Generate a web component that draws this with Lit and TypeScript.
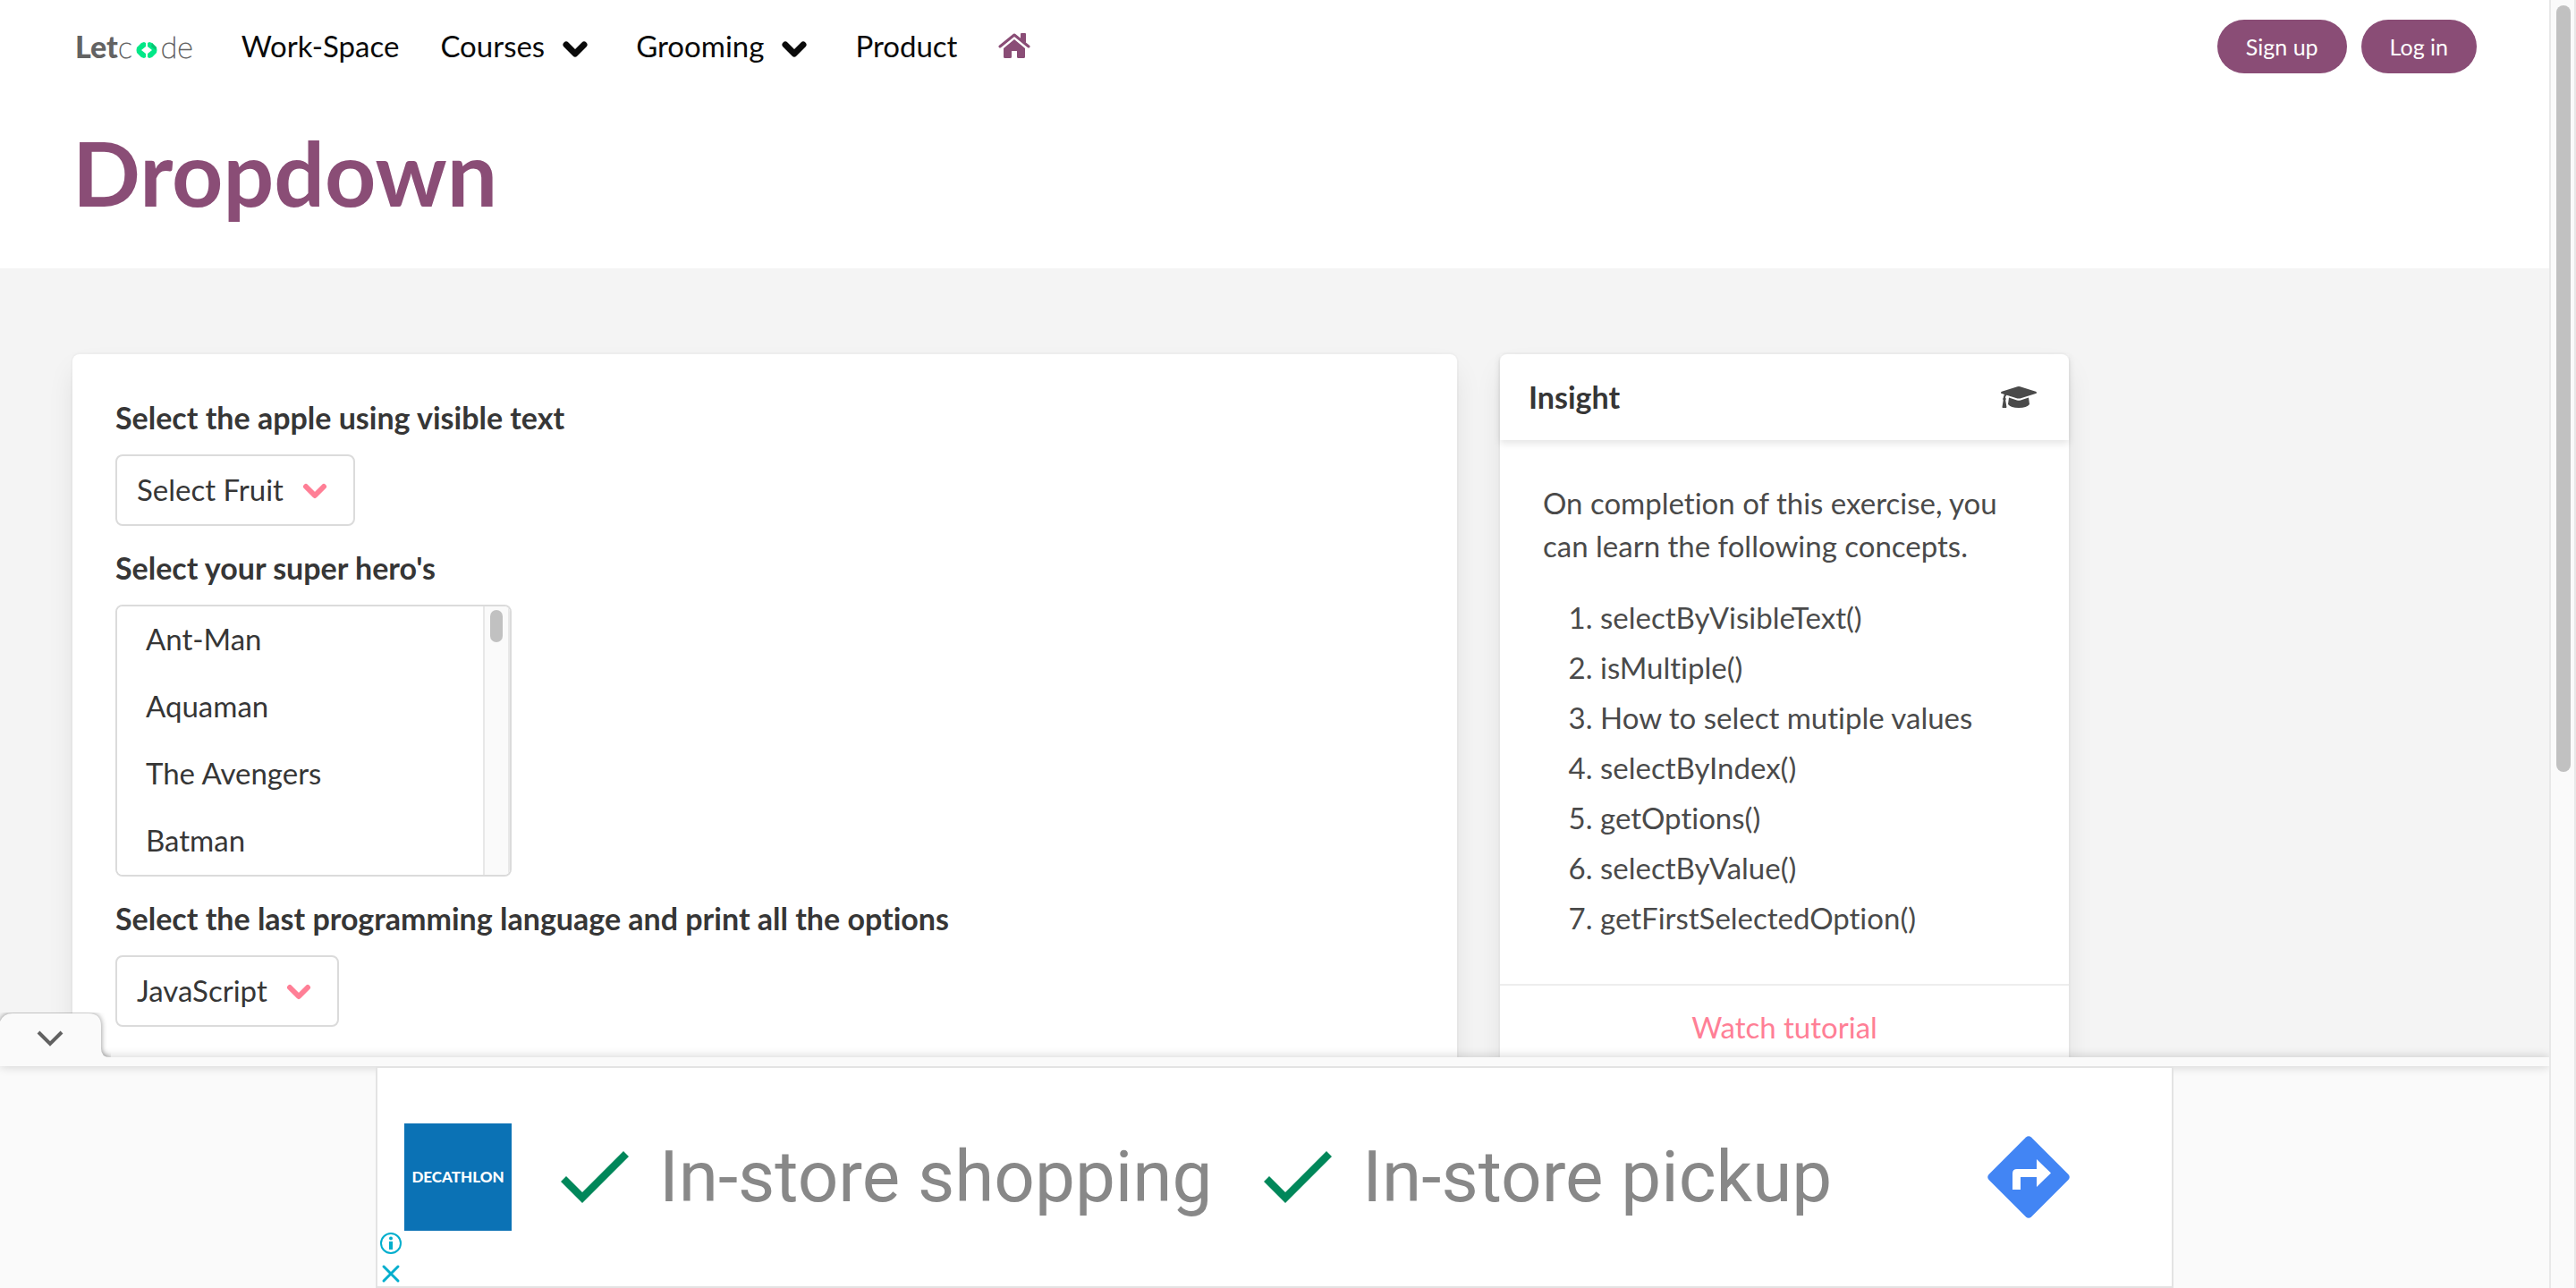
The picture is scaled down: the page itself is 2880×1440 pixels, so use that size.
import { LitElement, html, css, svg } from "lit";
import { customElement, property } from "lit/decorators.js";

const HEROES = [
  "Ant-Man", "Aquaman", "The Avengers", "Batman", "Batwoman", "Black Panther",
  "Captain Marvel", "Daredevil", "Doctor Strange", "Elektra", "Fantastic Four",
];

const CONCEPTS = [
  "selectByVisibleText()",
  "isMultiple()",
  "How to select mutiple values",
  "selectByIndex()",
  "getOptions()",
  "selectByValue()",
  "getFirstSelectedOption()",
];

const chevron = (cls: string, width: number) => html`
  <svg class=${cls} viewBox="0 0 28 20" aria-hidden="true">
    ${svg`<path d="M4 5 L14 15 L24 5" fill="none" stroke="currentColor"
      stroke-width=${width} stroke-linecap="round" stroke-linejoin="round" />`}
  </svg>
`;

const checkMark = html`
  <svg class="check" viewBox="0 0 76 58" aria-hidden="true">
    <path d="M0 34 L6 28 L24 46 L70 0 L76 6 L24 58 Z" fill="#00875a" />
  </svg>
`;

@customElement("site-nav")
class SiteNav extends LitElement {
  static styles = css`
    :host { display: block; }
    .nav {
      display: flex;
      align-items: center;
      height: 104px;
      padding: 0 81px;
    }
    a { color: #0a0a0a; text-decoration: none; }
    .logo {
      display: flex;
      align-items: baseline;
      margin-right: 31px;
      padding-left: 3px;
      color: #636363;
      font-size: 34px;
      line-height: 48px;
    }
    .bold { font-weight: 900; }
    .thin { font-weight: 100; -webkit-text-stroke: 1px #636363; }
    .mark { width: 24px; height: 18px; margin: 0 4px; }
    .item {
      display: flex;
      align-items: center;
      padding: 0 23px 2px;
      line-height: 48px;
    }
    .arrow { width: 28px; height: 20px; margin: 8px 8px 0 20px; }
    .home { width: 36px; height: 28px; color: #8a4d76; }
    .actions { display: flex; gap: 16px; margin-left: auto; }
    .pill {
      height: 60px;
      padding: 0 32px;
      border: 0;
      border-radius: 30px;
      background: #8a4d76;
      color: #fff;
      font: inherit;
      font-size: 25px;
    }
  `;

  render() {
    return html`
      <nav class="nav" aria-label="Main">
        <a class="logo" href="#home">
          <span class="bold">Let</span><span class="thin">c</span>
          <svg class="mark" viewBox="0 0 24 18" aria-hidden="true">
            <path d="M9 0 L11 1 V5 L6 9 L11 13 V17 L9 18 L6 17 L1 12 Q0 9 1 6 L6 1 Z" fill="#00e887" />
            <path d="M15 0 L13 1 V5 L18 9 L13 13 V17 L15 18 L18 17 L23 12 Q24 9 23 6 L18 1 Z" fill="#00e887" />
            <path d="M18 1 L23 6 L22 9 L17 5 Z" fill="#07c574" />
          </svg>
          <span class="thin">de</span>
        </a>
        <a class="item" href="#workspace">Work-Space</a>
        <a class="item" href="#courses">Courses ${chevron("arrow", 7)}</a>
        <a class="item" href="#grooming">Grooming ${chevron("arrow", 7)}</a>
        <a class="item" href="#product">Product</a>
        <a class="item" href="#top" aria-label="Home">
          <svg class="home" viewBox="0 0 36 28" fill="currentColor" aria-hidden="true">
            <path d="M18 7 L30 17 V26.500 Q30 28 28.500 28 H22.500 Q21 28 21 26.500 V20 H15 V26.500 Q15 28 13.500 28 H7.500 Q6 28 6 26.500 V17 Z" />
            <path d="M2 15 L18 2 L34 15" fill="none" stroke="currentColor" stroke-width="3" stroke-linecap="round" stroke-linejoin="round" />
            <path d="M25.500 0 H30 Q31 0 31 1 V11 L25 6.500 V1 Z" />
          </svg>
        </a>
        <div class="actions">
          <button class="pill" type="button">Sign up</button>
          <button class="pill" type="button">Log in</button>
        </div>
      </nav>
    `;
  }
}

@customElement("drop-down")
class DropDown extends LitElement {
  @property() label = "";
  @property({ type: Array }) options: string[] = [];

  static styles = css`
    :host { display: block; }
    .label {
      display: block;
      margin-bottom: 18px;
      color: #363636;
      font-size: 34px;
      font-weight: 700;
      line-height: 46px;
    }
    .box { position: relative; display: inline-block; vertical-align: top; }
    .select {
      display: block;
      height: 80px;
      padding: 0 78px 2px 22px;
      border: 2px solid #dbdbdb;
      border-radius: 8px;
      background: #fff;
      color: #363636;
      font: inherit;
      appearance: none;
    }
    .arrow {
      position: absolute;
      top: 31px;
      right: 31px;
      width: 28px;
      height: 20px;
      color: #ff7f96;
      pointer-events: none;
    }
  `;

  render() {
    return html`
      <label class="label" for="choice">${this.label}</label>
      <div class="box">
        <select class="select" id="choice">
          ${this.options.map((o) => html`<option>${o}</option>`)}
        </select>
        ${chevron("arrow", 6)}
      </div>
    `;
  }
}

@customElement("list-picker")
class ListPicker extends LitElement {
  @property() label = "";
  @property({ type: Array }) options: string[] = [];

  static styles = css`
    :host { display: block; }
    .label {
      display: block;
      margin-bottom: 18px;
      color: #363636;
      font-size: 34px;
      font-weight: 700;
      line-height: 46px;
    }
    .box {
      display: inline-flex;
      width: 439px;
      height: 300px;
      border: 2px solid #dbdbdb;
      border-radius: 8px;
      overflow: hidden;
      background: #fff;
      vertical-align: top;
    }
    .list {
      flex: 1;
      height: 300px;
      padding: 0;
      border: 0;
      outline: 0;
      overflow: hidden;
      background: #fff;
      color: #363636;
      font: inherit;
    }
    .list option { min-height: 43px; padding: 16px 32px; line-height: 43px; }
    .track {
      box-sizing: border-box;
      width: 30px;
      padding: 4px 6px;
      border: solid #e8e8e8;
      border-width: 0 2px;
      background: #fafafa;
    }
    .thumb { height: 36px; border-radius: 8px; background: #c1c1c1; }
  `;

  render() {
    return html`
      <label class="label" for="list">${this.label}</label>
      <div class="box">
        <select class="list" id="list" multiple>
          ${this.options.map((o) => html`<option>${o}</option>`)}
        </select>
        <div class="track" aria-hidden="true"><div class="thumb"></div></div>
      </div>
    `;
  }
}

@customElement("insight-card")
class InsightCard extends LitElement {
  static styles = css`
    :host { display: block; color: #4a4a4a; line-height: 48px; }
    .head {
      display: flex;
      align-items: center;
      justify-content: space-between;
      padding: 24px 32px;
      box-shadow: 0 4px 8px rgba(10, 10, 10, 0.1);
    }
    .title { margin: 0; color: #363636; font-size: 34px; font-weight: 700; }
    .cap { width: 40px; height: 24px; margin-right: 4px; }
    .body { padding: 46px 48px 50px; }
    .text { margin: 0 0 32px; }
    .list { display: grid; gap: 8px; margin: 0 0 0 64px; padding: 0; }
    .foot {
      display: block;
      padding: 22px 24px 26px;
      border-top: 2px solid #ededed;
      color: #ff7f96;
      text-align: center;
      text-decoration: none;
    }
  `;

  render() {
    return html`
      <header class="head">
        <h2 class="title">Insight</h2>
        <svg class="cap" viewBox="0 0 40 24" fill="currentColor" aria-hidden="true">
          <path d="M20 0 Q20.600 0 21.500 0.300 L39 5.700 Q40 6.100 40 6.900 Q40 7.700 39 8 L21.500 13.400 Q20 13.800 18.500 13.400 L6.500 9.700 Q5 11 5 12.500 Q6.500 14 5.200 15.600 L6.400 23 Q6.400 24 5.600 24 H2.200 Q1.400 24 1.500 23 L2.700 15.600 Q1.500 14 2.800 12.500 Q3 10.500 4 9 L1 8 Q0 7.700 0 6.900 Q0 6.100 1 5.700 L18.500 0.300 Q19.400 0 20 0 Z" />
          <path d="M9 12.600 L18 15.400 Q20 16 22 15.400 L31 12.600 L32 20 Q29 24 20 24 Q11 24 8 20 Z" />
        </svg>
      </header>
      <div class="body">
        <p class="text">On completion of this exercise, you can learn the following concepts.</p>
        <ol class="list">${CONCEPTS.map((c) => html`<li>${c}</li>`)}</ol>
      </div>
      <a class="foot" href="#tutorial">Watch tutorial</a>
    `;
  }
}

@customElement("anchor-ad")
class AnchorAd extends LitElement {
  static styles = css`
    :host { display: block; }
    .tab {
      position: relative;
      z-index: 1;
      display: block;
      width: 124px;
      height: 50px;
      padding: 0;
      border: 0;
      background: none;
      overflow: hidden;
    }
    .tab svg { display: block; width: 124px; height: 50px; }
    .edge { filter: drop-shadow(0 0 3px rgba(0, 0, 0, 0.45)); }
    .bar {
      position: relative;
      height: 10px;
      background: #fafafa;
      box-shadow: 0 0 12px rgba(0, 0, 0, 0.2);
    }
    .stage { display: flex; justify-content: center; background: #fafafa; }
    .banner {
      box-sizing: border-box;
      position: relative;
      display: flex;
      align-items: center;
      width: 2010px;
      height: 248px;
      padding: 0 114px 0 30px;
      border: 2px solid #e3e3e3;
      background: #fff;
    }
    .brand { width: 120px; height: 120px; margin-right: 55px; }
    .check { width: 76px; height: 58px; margin-right: 34px; }
    .copy {
      margin-right: 58px;
      color: #888;
      font-family: Roboto, "Liberation Sans", sans-serif;
      font-size: 80px;
      line-height: 96px;
      white-space: nowrap;
    }
    .route { width: 92px; height: 92px; margin-left: auto; }
    .choices {
      position: absolute;
      left: 3px;
      bottom: 2px;
      display: grid;
      gap: 10px;
      color: #00aecd;
    }
    .choices button { display: block; width: 24px; height: 24px; padding: 0; border: 0; background: none; color: inherit; }
    .choices svg { display: block; }
  `;

  render() {
    return html`
      <button class="tab" type="button" aria-label="Collapse">
        <svg viewBox="0 0 124 50" aria-hidden="true">
          <path class="edge" d="M0 10 Q4 1 14 1 H99 Q113 1 113 15 V40 Q113 50 123 50 V60 H0 Z" fill="#fafafa" />
          <path d="M43 22 L56 35 L69 22" fill="none" stroke="#616161" stroke-width="4" />
        </svg>
      </button>
      <div class="bar"></div>
      <div class="stage">
        <div class="banner">
          <svg class="brand" viewBox="0 0 120 120" role="img" aria-label="Decathlon">
            <rect width="120" height="120" fill="#0b72b5" />
            <text x="60" y="66" text-anchor="middle" fill="#fff" font-family="Lato, sans-serif" font-size="17" font-weight="900">DECATHLON</text>
          </svg>
          ${checkMark}
          <span class="copy">In-store shopping</span>
          ${checkMark}
          <span class="copy">In-store pickup</span>
          <svg class="route" viewBox="0 0 92 92" aria-hidden="true">
            <path d="M43 1.500 Q46 -1 49 1.500 L90.500 43 Q93 46 90.500 49 L49 90.500 Q46 93 43 90.500 L1.500 49 Q-1 46 1.500 43 Z" fill="#4285f4" />
            <path d="M28 60 V42 Q28 37 33 37 H55 V26 L71 41.500 L55 57 V46 H37 V60 Z" fill="#fff" />
          </svg>
          <div class="choices">
            <button type="button" aria-label="Ad information">
              <svg width="24" height="24" viewBox="0 0 24 24" aria-hidden="true">
                <circle cx="12" cy="12" r="11" fill="none" stroke="currentColor" stroke-width="2" />
                <circle cx="12" cy="6.500" r="2" fill="currentColor" />
                <rect x="10" y="10" width="4" height="9" fill="currentColor" />
              </svg>
            </button>
            <button type="button" aria-label="Close ad">
              <svg width="24" height="24" viewBox="0 0 24 24" aria-hidden="true">
                <path d="M4 4 L20 20 M20 4 L4 20" stroke="currentColor" stroke-width="3" stroke-linecap="round" />
              </svg>
            </button>
          </div>
        </div>
      </div>
    `;
  }
}

@customElement("app-root")
class AppRoot extends LitElement {
  static styles = css`
    :host {
      display: grid;
      grid-template-columns: 1fr 30px;
      height: 100vh;
      overflow: hidden;
      background: #fff;
      font-family: Lato, "Open Sans", sans-serif;
      font-size: 33px;
      font-variant-ligatures: none;
    }
    .page { position: relative; overflow: hidden; background: #f4f4f4; }
    .top { background: #fff; }
    .heading {
      margin: 0;
      padding: 34px 81px 54px;
      color: #8a4d76;
      font-size: 100px;
      font-weight: 700;
      line-height: 108px;
    }
    .columns {
      display: grid;
      grid-template-columns: repeat(12, 1fr);
      gap: 48px;
      padding: 96px 81px;
    }
    .card {
      border-radius: 8px;
      background: #fff;
      box-shadow: 0 16px 32px -4px rgba(10, 10, 10, 0.1), 0 0 0 2px rgba(10, 10, 10, 0.02);
    }
    .form {
      grid-column: span 7;
      display: grid;
      align-content: start;
      gap: 24px;
      padding: 48px;
    }
    .aside { grid-column: span 3; }
    .ad { position: absolute; left: 0; right: 0; bottom: 0; }
    .rail {
      padding: 6px 4px 6px 6px;
      border: solid #e8e8e8;
      border-width: 0 2px;
      background: #fafafa;
    }
    .grip { height: 60%; border-radius: 8px; background: #c1c1c1; }
  `;

  render() {
    return html`
      <main class="page">
        <div class="top">
          <site-nav></site-nav>
          <h1 class="heading">Dropdown</h1>
        </div>
        <div class="columns">
          <section class="card form">
            <drop-down label="Select the apple using visible text" .options=${["Select Fruit", "Apple", "Mango", "Orange", "Banana"]}></drop-down>
            <list-picker label="Select your super hero's" .options=${HEROES}></list-picker>
            <drop-down label="Select the last programming language and print all the options" .options=${["JavaScript", "Java", "Python", "Swift", "C#"]}></drop-down>
          </section>
          <insight-card class="card aside"></insight-card>
        </div>
        <anchor-ad class="ad"></anchor-ad>
      </main>
      <div class="rail" aria-hidden="true"><div class="grip"></div></div>
    `;
  }
}
